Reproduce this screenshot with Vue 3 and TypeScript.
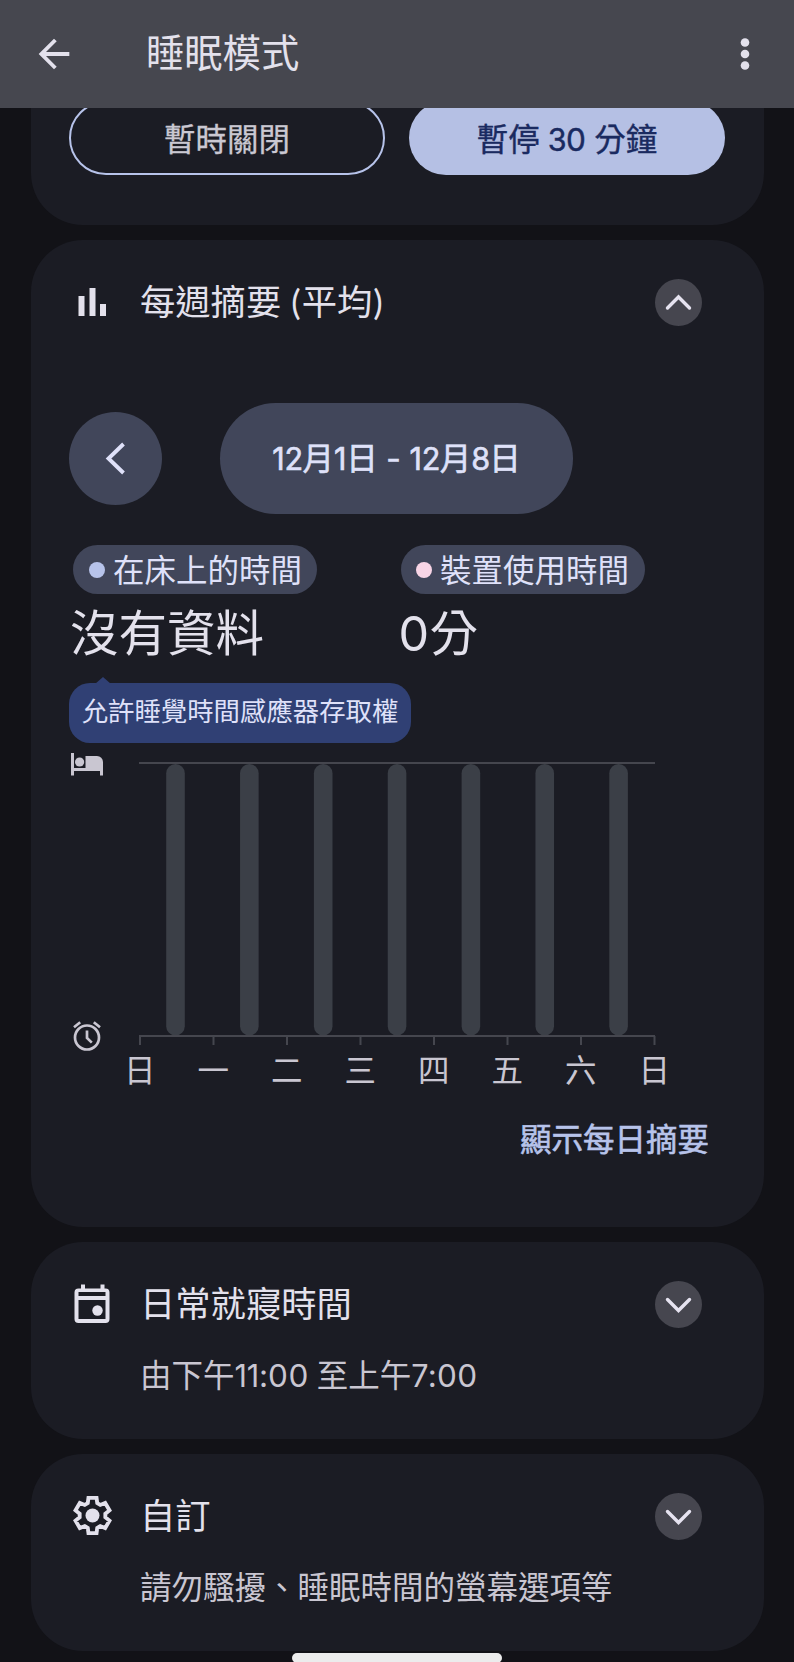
<script setup lang="ts">
import { h, type FunctionalComponent } from 'vue'

interface CollapsedCard {
  icon: 'calendar' | 'gear'
  title: string
  detail: string
}

const glyphClass: Record<string, string> = {
  '0': 'g-zero',
  '1': 'g-one',
  '2': 'g-two',
  '3': 'g-two',
  '7': 'g-seven',
  '8': 'g-two',
  ':': 'g-colon',
  '-': 'g-dash',
}

// Sets digits with proportional widths: narrow ones, round zeros.
const Figures: FunctionalComponent<{ text: string }> = (props) =>
  h(
    'span',
    { class: 'figures' },
    props.text.split(/([\d:-])/).map((part) => (glyphClass[part] ? h('span', { class: glyphClass[part] }, part) : part)),
  )
Figures.props = ['text']

const days: string[] = ['日', '一', '二', '三', '四', '五', '六', '日']
const step = 73.5
const barPitch = 73.85

const cards: CollapsedCard[] = [
  { icon: 'calendar', title: '日常就寢時間', detail: '由下午11:00 至上午7:00' },
  { icon: 'gear', title: '自訂', detail: '請勿騷擾、睡眠時間的螢幕選項等' },
]
</script>

<template>
  <div class="screen">
    <header class="app-bar">
      <svg class="back" viewBox="0 0 24 24"><path d="M20 11H7.83l5.59-5.59L12 4l-8 8 8 8 1.41-1.41L7.83 13H20z" /></svg>
      <h1>睡眠模式</h1>
      <svg class="more" viewBox="0 0 12 34">
        <circle cx="6" cy="5.5" r="4.3" /><circle cx="6" cy="17" r="4.3" /><circle cx="6" cy="28.5" r="4.3" />
      </svg>
    </header>

    <main>
      <section class="card actions-card">
        <div class="actions">
          <button class="action outlined">暫時關閉</button>
          <button class="action filled"><Figures text="暫停 30 分鐘" /></button>
        </div>
      </section>

      <section class="card summary">
        <div class="card-head">
          <svg class="lead" viewBox="0 0 48 48">
            <path d="M9.5 18h6v20h-6zM20.500 10h6v28h-6zM31 26h6v12h-6z" />
          </svg>
          <h2>每週摘要 <span class="paren">(</span>平均<span class="paren">)</span></h2>
          <button class="toggle">
            <svg viewBox="0 0 47 47"><path d="M12.5 29L23.5 18l11 11" /></svg>
          </button>
        </div>

        <div class="range">
          <button class="prev"><svg viewBox="0 0 93 93"><path d="M54.5 32L39.5 46.5l15 14.5" /></svg></button>
          <button class="dates"><Figures text="12月1日 - 12月8日" /></button>
        </div>

        <div class="stats">
          <div class="stat">
            <div class="chip"><i class="dot blue"></i><span>在床上的時間</span></div>
            <div class="value">沒有資料</div>
          </div>
          <div class="stat">
            <div class="chip"><i class="dot pink"></i><span>裝置使用時間</span></div>
            <div class="value"><Figures text="0分" /></div>
          </div>
        </div>

        <div class="tip">允許睡覺時間感應器存取權</div>

        <div class="chart">
          <div class="chart-icons">
            <svg class="bed" viewBox="0 0 32 23">
              <path d="M0 0h3v15h11.5V3H26a6 6 0 0 1 6 6v13.5h-3V18H3v4.5H0z" />
              <circle cx="8.6" cy="9" r="4.6" />
            </svg>
            <svg class="alarm" viewBox="0 0 28 30">
              <circle cx="14" cy="16.5" r="12" />
              <path d="M14 9.5v7.5l4.8 4.6" />
              <path d="M1 6.2l6.2-5M27 6.2l-6.2-5" />
            </svg>
          </div>
          <div class="plot">
            <svg viewBox="0 0 517 284">
              <rect v-for="n in 7" :key="n" class="bar" :x="27.2 + (n - 1) * barPitch" y="2" width="18.6" height="271.5" rx="9.3" />
              <path class="axis" d="M0 1h516M0 274h516" />
              <path v-for="(d, i) in days" :key="i" class="tick" :d="`M${1 + i * step} 274v9`" />
            </svg>
            <div class="days"><span v-for="(d, i) in days" :key="i">{{ d }}</span></div>
          </div>
        </div>

        <a class="daily">顯示每日摘要</a>
      </section>

      <section v-for="card in cards" :key="card.icon" class="card collapsed">
        <div class="card-head">
          <svg v-if="card.icon === 'calendar'" class="lead" viewBox="0 0 48 48">
            <path
              fill-rule="evenodd"
              d="M12 4.500h4v4h15.500v-4h4v4h1a4 4 0 0 1 4 4v26.500a4 4 0 0 1-4 4h-27a4 4 0 0 1-4-4v-26.500a4 4 0 0 1 4-4h2.500zM9.500 12v4h27v-4zM9.500 20v19h27v-19z"
            />
            <circle cx="28.500" cy="30.500" r="5.200" />
          </svg>
          <svg v-else class="lead" viewBox="0 0 24 24">
            <path
              class="gear"
              transform="translate(11.75 11.75) scale(.88) translate(-12 -12)"
              d="M19.300 13l2.350 1.900-2.450 4.250-2.800-1.150-1.700 1-.4 3H9.700l-.4-3-1.700-1-2.800 1.150L2.350 14.900 4.700 13v-2L2.350 9.100l2.450-4.250L7.600 6l1.700-1 .4-3h4.600l.4 3 1.700 1 2.800-1.150 2.450 4.250L19.300 11z"
            />
            <circle cx="11.750" cy="11.750" r="3.500" />
          </svg>
          <h2>{{ card.title }}</h2>
          <button class="toggle">
            <svg viewBox="0 0 47 47"><path d="M12.5 18.500L23.5 29.500l11-11" /></svg>
          </button>
        </div>
        <p><Figures :text="card.detail" /></p>
      </section>
    </main>

    <div class="home-indicator"></div>
  </div>
</template>

<style>
body {
  margin: 0;
  background: #121217;
}
.figures {
  white-space: pre;
}
.figures > span {
  display: inline-block;
  font-family: Inter, sans-serif;
  line-height: 1;
  text-align: center;
}
.figures > .g-one {
  width: 0.4em;
  font-size: 0.97em;
}
.figures > .g-two {
  width: 0.59em;
  font-size: 0.97em;
}
.figures > .g-seven {
  width: 0.54em;
  font-size: 0.97em;
}
.figures > .g-zero {
  width: 0.65em;
}
.figures > .g-colon {
  width: 0.28em;
}
.figures > .g-dash {
  width: 0.5em;
}
</style>

<style scoped>
.screen {
  position: relative;
  width: 794px;
  height: 1662px;
  overflow: hidden;
  background: #121217;
  color: #e3e1ec;
  font-family: Lato, 'Noto Sans CJK TC', sans-serif;
  font-size: 31.5px;
}
.screen * {
  box-sizing: border-box;
}
h1,
h2,
p {
  margin: 0;
  font-weight: 400;
  white-space: nowrap;
}
button {
  margin: 0;
  padding: 0;
  border: 0;
  font: inherit;
  color: inherit;
  white-space: nowrap;
}
svg {
  display: block;
  fill: #e3e1ec;
}
.app-bar {
  height: 108px;
  display: flex;
  align-items: center;
  padding: 0 43px 0 31px;
  background: #46474f;
}
.back {
  width: 46px;
  height: 46px;
}
h1 {
  flex: 1;
  margin: 0 0 4px 69px;
  font-size: 38.3px;
  line-height: 56px;
}
.more {
  width: 12px;
  height: 34px;
}
main {
  display: flex;
  flex-direction: column;
  gap: 15px;
  padding: 0 30px 0 31px;
}
.card {
  background: #1b1c24;
  border-radius: 52px;
}
.actions-card {
  height: 117px;
  border-radius: 0 0 52px 52px;
}
.actions {
  display: flex;
  align-items: flex-end;
  justify-content: space-between;
  height: 67px;
  padding: 0 39px 0 38px;
  overflow: hidden;
}
.action {
  flex: none;
  width: 316px;
  height: 74px;
  border-radius: 37px;
  line-height: 76px;
}
.outlined {
  border: 2px solid #b7c3ea;
  background: none;
  color: #cac8d2;
  line-height: 72px;
  -webkit-text-stroke: 0.3px #cac8d2;
}
.filled {
  background: #b5c0e4;
  color: #1a2a60;
  -webkit-text-stroke: 0.4px #1a2a60;
}
.summary {
  height: 987px;
  padding: 38px 39px 0 38px;
}
.card-head {
  display: flex;
  align-items: center;
  height: 48px;
}
.lead {
  width: 48px;
  height: 48px;
  flex: none;
}
h2 {
  flex: 1;
  margin-left: 23px;
  font-size: 35.3px;
  line-height: 48px;
}
.paren {
  margin: 0 1px;
}
.toggle {
  width: 47px;
  height: 47px;
  margin-right: 23px;
  border-radius: 50%;
  background: #46464f;
}
.toggle svg,
.prev svg {
  width: 100%;
  height: 100%;
  fill: none;
  stroke: #e6e3f0;
  stroke-width: 3.4;
  stroke-linecap: round;
}
.range {
  display: flex;
  align-items: center;
  gap: 58px;
  margin-top: 77px;
}
.prev {
  width: 93px;
  height: 93px;
  border-radius: 50%;
  background: #41465a;
}
.prev svg {
  stroke: #dfe1f9;
  stroke-width: 3.9;
  stroke-linecap: butt;
}
.dates {
  width: 353px;
  height: 111px;
  border-radius: 56px;
  background: #41465a;
  color: #dfe1f9;
  -webkit-text-stroke: 0.6px #dfe1f9;
  line-height: 111px;
}
.stats {
  display: flex;
  margin-top: 31px;
}
.stat {
  width: 328px;
}
.chip {
  display: flex;
  align-items: center;
  width: 244px;
  height: 49px;
  margin-left: 4px;
  padding-left: 16px;
  border-radius: 25px;
  background: #41465a;
  color: #dfe1f9;
  white-space: nowrap;
}
.chip span {
  margin-bottom: 3px;
}
.dot {
  flex: none;
  width: 16px;
  height: 16px;
  margin-right: 8px;
  border-radius: 50%;
}
.stat + .stat .dot {
  margin-left: -1px;
}
.blue {
  background: #b7c3ea;
}
.pink {
  background: #f8d5e6;
}
.value {
  height: 70px;
  margin: 3px 0 1px 1px;
  font-size: 48.5px;
  line-height: 70px;
}
.tip {
  position: relative;
  width: 342px;
  height: 60px;
  margin-top: 15px;
  border-radius: 21px;
  background: #304074;
  color: #dfe1f9;
  font-size: 26.4px;
  line-height: 56px;
  text-align: center;
  white-space: nowrap;
}
.tip::before {
  content: '';
  position: absolute;
  left: 26px;
  top: -6px;
  border: 8px solid transparent;
  border-top: 0;
  border-bottom: 7px solid #304074;
}
.chart {
  display: flex;
  margin-top: 10px;
  padding-left: 2px;
}
.chart-icons {
  width: 68px;
}
.chart-icons svg {
  fill: #c9c6d1;
}
.bed {
  width: 32px;
  height: 23px;
}
.alarm {
  width: 28px;
  height: 30px;
  margin: 245px 0 0 2px;
}
.chart .alarm {
  fill: none;
  stroke: #c9c6d1;
  stroke-width: 2.7;
}
.plot {
  width: 517px;
  margin-top: 9px;
}
.plot svg {
  width: 517px;
  height: 284px;
}
.bar {
  fill: #3b3f47;
}
.axis,
.tick {
  fill: none;
  stroke: #45464e;
  stroke-width: 2;
}
.days {
  display: flex;
  justify-content: space-between;
  margin: 2px -14px 0 -15px;
  color: #c9c6d1;
  line-height: 44px;
}
.daily {
  display: block;
  margin: 24px 16px 0 0;
  color: #b7c3ea;
  -webkit-text-stroke: 0.6px #b7c3ea;
  line-height: 46px;
  text-align: right;
}
.collapsed {
  height: 197px;
  padding: 38px 39px 0 38px;
}
.collapsed p {
  margin: 24px 0 0 71px;
  color: #c9c6d1;
  line-height: 46px;
}
.gear {
  fill: none;
  stroke: #e3e1ec;
  stroke-width: 2.2;
}
.home-indicator {
  position: absolute;
  left: 292px;
  bottom: -1px;
  width: 210px;
  height: 10px;
  border-radius: 5px;
  background: #ececec;
}
</style>
